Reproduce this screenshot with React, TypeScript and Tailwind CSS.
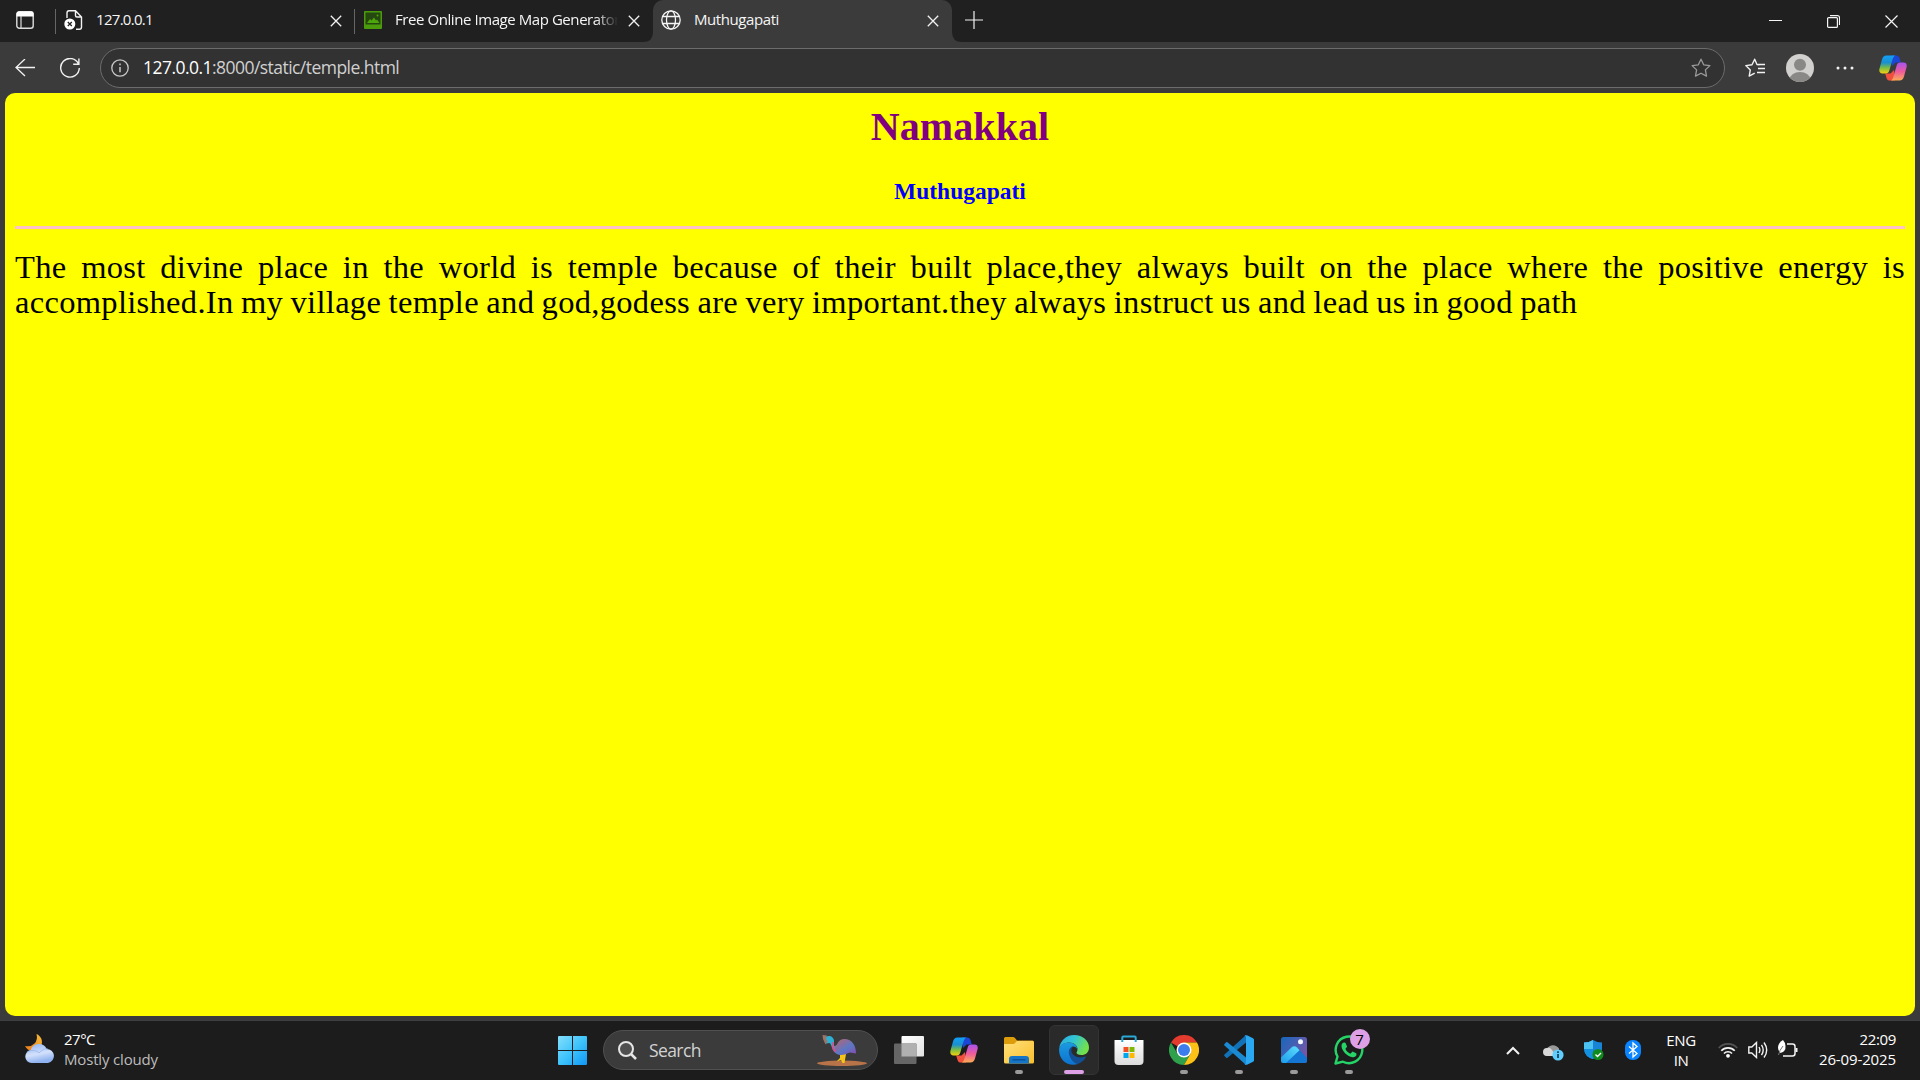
import React from "react";
import type { ReactNode } from "react";

function Close({ className = "" }: { className?: string }) {
  return (
    <svg className={className} width="12" height="12" viewBox="0 0 12 12" fill="none" stroke="#f2f2f2" strokeWidth="1.3">
      <path d="M.8 .8 11.2 11.2M11.2 .8 .8 11.2" />
    </svg>
  );
}

function CopilotIcon() {
  return (
    <svg width="28" height="26" viewBox="0 0 28 26">
      <defs>
        <linearGradient id="cpA" x1="0" y1="0" x2="0" y2="1">
          <stop offset="0" stopColor="#12a0f5" />
          <stop offset=".4" stopColor="#1a8fd0" />
          <stop offset=".7" stopColor="#7fbf3f" />
          <stop offset="1" stopColor="#f7cf10" />
        </linearGradient>
        <linearGradient id="cpB" x1="0" y1="0" x2="0" y2="1">
          <stop offset="0" stopColor="#a653f0" />
          <stop offset=".5" stopColor="#ee5a9c" />
          <stop offset="1" stopColor="#fbab55" />
        </linearGradient>
      </defs>
      <path d="M12 .5h5c2 0 3 1 3.500 2.600L21.800 7.500h-5.300L13 11z" fill="#1c46d6" />
      <path d="M16 25.500h-5c-2 0-3-1-3.500-2.600L6.200 18.500h5.300L15 15z" fill="#f0503c" />
      <path d="M7.500.5h9c-1.600.6-2.300 2-2.800 3.600l-3.400 11.500c-.6 2-1.600 2.900-3.600 2.900H3.500C1 18.500-.2 16.800.4 14L3 4.500C3.700 2 5.200.5 7.500.5z" fill="url(#cpA)" />
      <path d="M20.500 25.500h-9c1.600-.6 2.300-2 2.800-3.600l3.400-11.500c.6-2 1.600-2.900 3.600-2.900h3.200c2.500 0 3.700 1.700 3.100 4.500L25 21.500c-.7 2.500-2.200 4-4.500 4z" fill="url(#cpB)" />
    </svg>
  );
}

function TabStrip() {
  return (
    <div className="flex h-[42px] bg-[#202020] text-[15px] text-[#f5f5f5]">
      <div className="flex w-[55px] items-center pb-[2px] pl-4">
        <svg width="18" height="18" viewBox="0 0 18 18" fill="none">
          <rect x=".8" y=".8" width="16.400" height="16.400" rx="2.500" stroke="#ddd" strokeWidth="1.400" />
          <path d="M.5 5.500V3Q.5.5 3 .5h12q2.500 0 2.500 2.500v2.500z" fill="#fff" />
          <path d="M5 5v12" stroke="#ddd" strokeWidth="1.200" />
        </svg>
      </div>
      <div className="mt-[9px] h-[25px] w-px bg-[#666]" />
      <div className="flex w-[298px] items-center pb-[2px] pl-2">
        <svg className="shrink-0" width="19" height="20" viewBox="0 0 19 20" fill="none">
          <path d="M3 8V3Q3 .8 5 .8h6.500L17.500 7v10q0 2.200-2 2.200H12M11.500 1v4.500q0 1.500 1.500 1.500h4.500" stroke="#f2f2f2" strokeWidth="1.400" />
          <circle cx="5.800" cy="14" r="5.500" fill="#fff" />
          <path d="m3.800 12 4 4m0-4-4 4" stroke="#222" strokeWidth="1.300" />
        </svg>
        <span className="-mt-[2px] ml-[13px] w-[234px] shrink-0 tracking-[-0.7px]">127.0.0.1</span>
        <Close className="mt-[1px] shrink-0" />
      </div>
      <div className="mt-[9px] h-[25px] w-px bg-[#666]" />
      <div className="flex w-[298px] items-center pb-[2px] pl-[9px]">
        <svg className="shrink-0" width="18" height="18" viewBox="0 0 18 18">
          <rect width="18" height="18" rx="1" fill="#4a9c0c" />
          <path d="M1.500 1.500h15v12h-15z" fill="#24480f" />
          <path d="M3 12l3-4 1.500 1.500L10 6.500l2 3 1-1 2.500 3.500z" fill="#4da60a" />
          <circle cx="13.500" cy="4.500" r="1" fill="#4da60a" />
        </svg>
        <span className="-mt-[2px] ml-[13px] w-[223px] shrink-0 overflow-hidden whitespace-nowrap tracking-[-0.43px] [mask-image:linear-gradient(to_right,black_90%,transparent)]">
          Free Online Image Map Generator
        </span>
        <Close className="mt-[1px] ml-[10px] shrink-0" />
      </div>
      <div className="relative flex h-[42px] w-[299px] items-center rounded-t-[10px] bg-[#3b3b3b] pb-[2px] pl-2">
        <svg className="absolute bottom-0 -left-[10px]" width="10" height="10" viewBox="0 0 10 10">
          <path d="M10 0v10H0Q10 10 10 0z" fill="#3b3b3b" />
        </svg>
        <svg className="absolute -right-[10px] bottom-0" width="10" height="10" viewBox="0 0 10 10">
          <path d="M0 0v10h10Q0 10 0 0z" fill="#3b3b3b" />
        </svg>
        <svg className="shrink-0" width="20" height="20" viewBox="0 0 20 20" fill="none" stroke="#f5f5f5" strokeWidth="1.300">
          <circle cx="10" cy="10" r="9.200" />
          <ellipse cx="10" cy="10" rx="4.500" ry="9.200" />
          <path d="M1.500 6.500h17M1.500 13.500h17" />
        </svg>
        <span className="-mt-[2px] ml-[13px] w-[233px] shrink-0 tracking-[-0.42px]">Muthugapati</span>
        <Close className="mt-[1px] shrink-0" />
      </div>
      <div className="flex flex-1 items-start">
        <svg className="mt-[11px] ml-[13px]" width="18" height="18" viewBox="0 0 18 18" stroke="#f2f2f2" strokeWidth="1.200">
          <path d="M9 0v18M0 9h18" />
        </svg>
        <svg className="mt-[14px] ml-auto" width="13" height="14" viewBox="0 0 13 14" stroke="#f5f5f5">
          <path d="M0 6.500h13" />
        </svg>
        <svg className="mt-[15px] ml-[45px]" width="13" height="13" viewBox="0 0 13 13" fill="none" stroke="#f5f5f5" strokeWidth="1.200">
          <rect x=".6" y="2.600" width="9.800" height="9.800" rx="1" />
          <path d="M3 .6h7.500q2 0 2 2v7.400" />
        </svg>
        <svg className="mt-[15px] mr-[22px] ml-[45px]" width="13" height="13" viewBox="0 0 13 13" stroke="#f5f5f5" strokeWidth="1.200">
          <path d="M.5.5l12 12M12.500.5l-12 12" />
        </svg>
      </div>
    </div>
  );
}

const STAR = "M10 1.200 12.700 6.800 18.900 7.600 14.400 11.900 15.500 18.100 10 15.200 4.500 18.100 5.600 11.900 1.100 7.600 7.300 6.800z";

function Toolbar() {
  return (
    <div className="flex h-[51px] items-center bg-[#3b3b3b] pt-px">
      <svg className="ml-[15px]" width="20" height="18" viewBox="0 0 20 18" fill="none" stroke="#f2f2f2" strokeWidth="1.300">
        <path d="M20 8.500H1M10 0 1 8.500l9 8.500" />
      </svg>
      <svg className="ml-[25px]" width="20" height="20" viewBox="0 0 20 20" fill="none" stroke="#f2f2f2" strokeWidth="1.400">
        <path d="M18.500 6A9.300 9.300 0 1 0 19.300 10M18.900.5v5.700h-5.700" />
      </svg>
      <div className="ml-5 flex h-10 w-[1625px] items-center rounded-full border border-[#6c6c6c] bg-[#323232] pr-[13px] pl-[10px]">
        <svg width="18" height="18" viewBox="0 0 18 18" fill="none" stroke="#c8c8c8" strokeWidth="1.300">
          <circle cx="9" cy="9" r="8.200" />
          <path d="M9 8v5.200M9 4.500v1.800" strokeWidth="1.500" />
        </svg>
        <span className="-mt-[2px] ml-[14px] text-[17.5px] tracking-[-0.54px] text-[#d0d0d0]">
          <span className="text-white">127.0.0.1</span>:8000/static/temple.html
        </span>
        <svg className="ml-auto" width="20" height="20" viewBox="0 0 20 20" fill="none" stroke="#9a9a9a" strokeWidth="1.300" strokeLinejoin="round">
          <path d={STAR} />
        </svg>
      </div>
      <svg className="ml-5" width="20" height="20" viewBox="0 0 20 20" fill="none" stroke="#f2f2f2" strokeWidth="1.400" strokeLinejoin="round">
        <path d="M14.500 6.800 12 6.500 9.700 1.200 7 6.800.8 7.600 5.300 11.900 4.200 18.100 9.700 15.200M13 6.500h7M13 10.500h7M12 14.500h8" />
      </svg>
      <svg className="ml-[21px]" width="28" height="28" viewBox="0 0 28 28">
        <defs>
          <clipPath id="avatar"><circle cx="14" cy="14" r="14" /></clipPath>
        </defs>
        <g clipPath="url(#avatar)">
          <rect width="28" height="28" fill="#d2d0ce" />
          <circle cx="14" cy="10.800" r="6" fill="#8a8886" />
          <ellipse cx="14" cy="26" rx="10.500" ry="8" fill="#8a8886" />
        </g>
      </svg>
      <svg className="ml-[22px]" width="18" height="4" viewBox="0 0 18 4" fill="#f2f2f2">
        <circle cx="2" cy="2" r="1.500" /><circle cx="9" cy="2" r="1.500" /><circle cx="16" cy="2" r="1.500" />
      </svg>
      <div className="ml-[25px]"><CopilotIcon /></div>
    </div>
  );
}

function Page() {
  return (
    <div className="flex h-[927px] flex-col bg-[#3b3b3b] px-[5px]">
      <div className="h-[923px] rounded-[10px] bg-[#ffff00] px-[10px] pt-[11px]">
        <h1 className="text-center font-['Liberation_Serif',serif] text-[40px] leading-[46px] font-bold tracking-[0.1px] text-[purple]">Namakkal</h1>
        <h3 className="mt-[28px] text-center font-['Liberation_Serif',serif] text-[23.4px] leading-[27px] font-bold tracking-[0.05px] text-[#0000ff]">Muthugapati</h3>
        <div className="mt-[21px] h-[3px] bg-[pink]" />
        <div className="mt-[21px] font-['Liberation_Serif',serif] text-[32.500px] leading-[35px] whitespace-nowrap text-black">
          <p className="tracking-[0.31px] [text-align-last:justify]">
            The most divine place in the world is temple because of their built place,they always built on the place where the positive energy is
          </p>
          <p className="tracking-[0.31px] [word-spacing:-1px]">
            accomplished.In my village temple and god,godess are very important.they always instruct us and lead us in good path
          </p>
        </div>
      </div>
    </div>
  );
}

function Slot({ children, mark = "dot" }: { children: ReactNode; mark?: "none" | "dot" | "active" }) {
  return (
    <div className="flex h-full w-[55px] flex-col items-center pt-1">
      <div
        className={
          mark === "active"
            ? "flex h-[50px] w-[50px] flex-col items-center rounded-md border border-[#333] bg-[#2a2a2a]"
            : "flex h-[50px] w-[50px] flex-col items-center border border-transparent"
        }
      >
        <div className="flex h-[44px] items-center pt-[4px]">{children}</div>
        {mark === "dot" && <div className="h-1 w-2 shrink-0 rounded-full bg-[#9a9a9a]" />}
        {mark === "active" && <div className="h-1 w-5 shrink-0 rounded-full bg-[#dda0e6]" />}
      </div>
    </div>
  );
}

function WeatherIcon() {
  return (
    <svg width="30" height="30" viewBox="0 0 30 30">
      <defs>
        <linearGradient id="moon" x1="1" y1="0" x2="0" y2="1">
          <stop offset="0" stopColor="#f5bd3c" /><stop offset="1" stopColor="#ee7a18" />
        </linearGradient>
        <linearGradient id="cloud" x1="0" y1="0" x2=".3" y2="1">
          <stop offset="0" stopColor="#8fb4f5" /><stop offset=".6" stopColor="#d3e0fa" /><stop offset="1" stopColor="#8fb2f0" />
        </linearGradient>
      </defs>
      <path d="M11.500 0C16 2 18 6.500 16.500 11L8 17Q2.500 17 0 12q6 1.200 9.500-2.500T11.500 0z" fill="url(#moon)" />
      <path d="M6.500 29a6.500 6.500 0 0 1-.8-12.900 8.600 8.600 0 0 1 16-1.200A7.100 7.100 0 0 1 23 29z" fill="url(#cloud)" />
      <path d="M2 18c6-3 10-1 12 1 3-3 6-5 9-4" fill="none" stroke="#8fb0ee" strokeWidth="1" opacity=".7" />
    </svg>
  );
}

function Bird() {
  return (
    <svg width="50" height="31" viewBox="0 0 50 31">
      <defs>
        <linearGradient id="plume" x1="0" y1="0" x2="1" y2="1">
          <stop offset="0" stopColor="#b3705f" /><stop offset=".35" stopColor="#8c6c9c" /><stop offset=".6" stopColor="#5a78c4" /><stop offset="1" stopColor="#8c48b0" />
        </linearGradient>
      </defs>
      <ellipse cx="25" cy="28.300" rx="25" ry="2.700" fill="#b87448" />
      <path d="M23 19h5l-2 5 1 4h-1.500l-1.500-3-4.500 1.500L23 23zM27 19h2l-1.500 9h-2z" fill="#f5c518" />
      <path d="M14 8c1 5 1 9 7 11.500 4 1.500 8-.5 12-2l6 1c0-7-3-14.500-12-14.500-5 0-6 4.500-8 6.500-2 1-4 0-5-2.500z" fill="url(#plume)" />
      <path d="M8.500 2c4-2.500 8.500 0 8.500 4 0 2-.5 4 1 8-4-1.500-3.500-5-5.500-6l-3.500.5z" fill="#2fb0d2" />
      <path d="M5.500 0l4.500.5-1 3 1.500 3-2 3L6 4z" fill="#9a7668" />
      <path d="M15.500 7c.5 3-.5 6 3 9.500" stroke="#e34a92" strokeWidth="1.500" fill="none" />
    </svg>
  );
}

function EdgeIcon() {
  return (
    <svg width="30" height="30" viewBox="0 0 30 30">
      <defs>
        <linearGradient id="egTop" x1="0" y1="0" x2="1" y2=".4">
          <stop offset="0" stopColor="#2aa7e6" /><stop offset=".5" stopColor="#31c5d3" /><stop offset="1" stopColor="#72e04c" />
        </linearGradient>
        <linearGradient id="egLeft" x1="0" y1="0" x2="0" y2="1">
          <stop offset="0" stopColor="#1b9be0" /><stop offset="1" stopColor="#0d72cf" />
        </linearGradient>
      </defs>
      <path d="M.2 13.500C1 6 7 0 15 0c9 0 15 6 15 12.500 0 5-3.500 7.500-7.500 7.500-3.500 0-5-1.200-5-2.200 0-.8 1-1.300 1-3.800 0-3.500-3.500-6.500-8.200-6.500C6 7.500 1.500 9.500.2 13.500z" fill="url(#egTop)" />
      <path d="M11 12c-3.500 2-4 7-1.500 11.500 2 3.500 5.500 5.500 9 5.500 3.500-1 6.500-3.500 8.200-6.500.4-.8-.2-1.300-.8-.9C20 24 12.500 21 12.300 15.500c0-1.500.7-3 2.200-4z" fill="#124f94" />
      <path d="M.1 14C1 9.500 5.500 7.300 10 7.500c5 .2 8.300 3 8.200 6.500-1-1.800-2.600-2.500-4-2.500-3 0-5 3.500-4.200 7.500 1 5 5 9.500 9 10-10 3.200-19.500-4-18.900-15z" fill="url(#egLeft)" />
    </svg>
  );
}

function ChromeIcon() {
  return (
    <svg width="30" height="30" viewBox="0 0 30 30">
      <path d="M15 15 2 7.500A15 15 0 0 1 28 7.500H15z" fill="#e33b2e" />
      <path d="M15 15 8.500 18.750 2 7.500A15 15 0 0 0 15 30l6.500-11.250z" fill="#2fa04c" />
      <path d="M15 7.500h13A15 15 0 0 1 15 30l6.500-11.250z" fill="#fbc116" />
      <circle cx="15" cy="15" r="7.500" fill="#fff" />
      <circle cx="15" cy="15" r="6" fill="#3b7ded" />
    </svg>
  );
}

function Taskbar() {
  return (
    <div className="flex h-[60px] items-start border-t border-[#3d4043] bg-[#1c1c1c] text-[15px]">
      <div className="flex w-[546px] items-start pt-[13px] pl-[25px]">
        <WeatherIcon />
        <div className="-mt-[5px] ml-[9px] leading-5">
          <div className="tracking-[-0.5px] text-white">27°C</div>
          <div className="tracking-[-0.17px] text-[#bdbdbd]">Mostly cloudy</div>
        </div>
      </div>
      <svg className="mt-[15px] ml-3" width="29" height="29" viewBox="0 0 29 29">
        <defs>
          <linearGradient id="win" x1="0" y1="0" x2="1" y2="1">
            <stop offset="0" stopColor="#85dffc" /><stop offset=".5" stopColor="#3fc4fb" /><stop offset="1" stopColor="#0f97f5" />
          </linearGradient>
        </defs>
        <path d="M0 1q0-1 1-1h13v14H0zM15 0h13q1 0 1 1v13H15zM0 15h14v14H1q-1 0-1-1zM15 15h14v13q0 1-1 1H15z" fill="url(#win)" />
      </svg>
      <div className="mt-[9px] ml-4 flex h-10 w-[275px] items-center rounded-full border border-[#505050] bg-[#3b3b3b] pl-[14px]">
        <svg width="19" height="19" viewBox="0 0 19 19" fill="none" stroke="#e6e6e6" strokeWidth="2">
          <circle cx="8" cy="8" r="7" fill="#505050" /><path d="m13 13 5 5" strokeWidth="2.500" />
        </svg>
        <span className="ml-3 text-[17.5px] tracking-[-0.6px] text-[#d2d2d2]">Search</span>
        <div className="mr-[10px] ml-auto"><Bird /></div>
      </div>
      <div className="ml-[3px] flex h-full w-[495px]">
        <Slot mark="none">
          <svg width="30" height="28" viewBox="0 0 30 28">
            <defs><linearGradient id="tv" x1="0" y1="0" x2="1" y2="1"><stop stopColor="#fff" /><stop offset="1" stopColor="#e2e2e2" /></linearGradient></defs>
            <rect x="7.500" width="22.500" height="20.500" rx="1" fill="url(#tv)" />
            <rect y="7.500" width="22.500" height="20.500" rx="1" fill="#666" />
            <rect x="7.500" y="7.500" width="15" height="13" fill="#b0b0b0" />
          </svg>
        </Slot>
        <Slot mark="none"><CopilotIcon /></Slot>
        <Slot>
          <svg width="30" height="27" viewBox="0 0 30 27">
            <defs><linearGradient id="fo" x1="0" y1="0" x2="1" y2="1"><stop stopColor="#ffe07a" /><stop offset="1" stopColor="#fabf2c" /></linearGradient></defs>
            <path d="M0 1.500Q0 0 1.500 0H9q1 0 2 1l2 2.500h15.500Q30 3.500 30 5v6H0z" fill="#dd9d0b" />
            <path d="M0 7h10l3-3h15.500Q30 4 30 5.500V25q0 1.500-1.500 1.500h-27Q0 26.500 0 25z" fill="url(#fo)" />
            <path d="M5 26.500V22q0-3 3-3h14q3 0 3 3v4.500z" fill="#1575c8" />
            <path d="M8.500 22.800h13" stroke="#0b4d90" strokeWidth="1.300" />
          </svg>
        </Slot>
        <Slot mark="active"><EdgeIcon /></Slot>
        <Slot mark="none">
          <svg width="30" height="30" viewBox="0 0 30 30">
            <defs><linearGradient id="st" x1="0" y1="0" x2="0" y2="1"><stop stopColor="#fff" /><stop offset="1" stopColor="#dcdcdc" /></linearGradient></defs>
            <path d="M.5 5.500Q.5 5 1 5h28q.5 0 .5.500V26q0 4-4 4h-21q-4 0-4-4z" fill="url(#st)" />
            <path d="M8.300 7V2.500q0-1 1-1h11.400q1 0 1 1V7" fill="none" stroke="#2aa9d8" strokeWidth="2" />
            <path d="M9.500 12h5v5h-5z" fill="#f25022" /><path d="M15.500 12h5v5h-5z" fill="#7fba00" />
            <path d="M9.500 18h5v5h-5z" fill="#00a4ef" /><path d="M15.500 18h5v5h-5z" fill="#ffb900" />
          </svg>
        </Slot>
        <Slot><ChromeIcon /></Slot>
        <Slot>
          <svg width="30" height="30" viewBox="0 0 30 30">
            <path d="M22 7.500 3.500 22.700q-.8.500-1.400 0L.5 21q-.7-.8 0-1.500L22 0z" fill="#1272b8" />
            <path d="M22 22.500 3.500 7.300q-.8-.5-1.400 0L.5 9q-.7.800 0 1.500L22 30z" fill="#1a8ad4" />
            <path d="M20.500.5Q22-.2 23.500.5l5.500 2.700q1 .5 1 1.600v20.400q0 1.100-1 1.600l-5.500 2.700q-1.500.7-3 0Q22 29.500 22 27.500v-25Q22 1 20.500.5z" fill="#2aa8f2" />
          </svg>
        </Slot>
        <Slot>
          <svg width="26" height="26" viewBox="0 0 26 26">
            <defs>
              <linearGradient id="ph" x1="0" y1="0" x2="1" y2=".6"><stop stopColor="#1568bd" /><stop offset="1" stopColor="#7656a8" /></linearGradient>
              <linearGradient id="ph2" x1="1" y1="0" x2="0" y2="1"><stop stopColor="#5de0ff" /><stop offset="1" stopColor="#1c9bea" /></linearGradient>
              <clipPath id="phc"><rect width="26" height="26" rx="2.500" /></clipPath>
            </defs>
            <g clipPath="url(#phc)">
              <path d="M0 0h26v26H0z" fill="url(#ph)" />
              <path d="M17 11.500 26 21v5H3z" fill="#1476d2" />
              <path d="M0 20.500 10.500 10.500q2.800-2.400 5.500 0l2.500 2.700L5 26H0z" fill="url(#ph2)" />
              <circle cx="19.500" cy="4.700" r="2.500" fill="#f4f8ff" />
            </g>
          </svg>
        </Slot>
        <Slot>
          <div className="relative">
            <svg width="30" height="30" viewBox="0 0 30 30" fill="none">
              <path d="M1.500 28.500 3.500 21.500A13.300 13.300 0 1 1 9 26.700z" stroke="#25d366" strokeWidth="2.400" strokeLinejoin="round" />
              <path d="M10.500 7.500c-1.500-.3-3.200 1.300-3 3.700.5 5 6 10.500 11 11 2.500.2 4.300-1.500 4-3.300l-.3-.6-3.700-1.700-2.100 2.100c-2.400-.9-4-2.500-5-4.900l1.700-2.100L11.600 8z" fill="#25d366" />
            </svg>
            <div className="absolute -top-[6px] left-[16px] flex h-5 w-5 items-center justify-center rounded-full bg-[#dda0e6] text-[15px] leading-none text-black">7</div>
          </div>
        </Slot>
      </div>
      <div className="flex h-[58px] flex-1 items-center text-white">
        <svg className="ml-[130px]" width="14" height="9" viewBox="0 0 14 9" fill="none" stroke="#f2f2f2" strokeWidth="2"><path d="M1 8l6-6 6 6" /></svg>
        <svg className="mt-1 ml-[23px]" width="21" height="18" viewBox="0 0 21 18">
          <path d="M4 13a4 4 0 0 1 0-7.500 7 6.500 0 0 1 12 0v7.500z" fill="#999" /><path d="M4 13a4 4 0 0 1 0-8q3-1 5 2l4 6z" fill="#d8d8d8" />
          <circle cx="15" cy="12" r="5.600" fill="#60cdff" /><path d="M15 11v4M15 8.300v1.600" stroke="#102a40" strokeWidth="1.500" />
        </svg>
        <svg className="ml-5" width="20" height="21" viewBox="0 0 20 21">
          <path d="M9 0q4 2.500 9 2.500v7Q17 17 9 19 1 17 0 9.500v-7Q5 2.500 9 0z" fill="#1884d8" /><path d="M9 0v9H0V2.500Q5 2.500 9 0z" fill="#4cc2f1" /><path d="M0 9h9v10Q1 17 0 9z" fill="#1490df" />
          <circle cx="14" cy="14.500" r="5.500" fill="#108a1c" /><path d="m11.500 14.500 2 2 3.500-3.500" stroke="#fff" strokeWidth="1.400" fill="none" />
        </svg>
        <svg className="ml-[21px]" width="16" height="20" viewBox="0 0 16 20">
          <rect width="16" height="20" rx="7.500" fill="#0a84ff" /><path d="m4 6.500 8 7L8 17V3l4 3.500-8 7" fill="none" stroke="#fff" strokeWidth="1.300" />
        </svg>
        <div className="ml-[20px] w-10 text-center leading-5 tracking-[-0.4px]">ENG<br />IN</div>
        <svg className="ml-[17px]" width="20" height="16" viewBox="0 0 20 16" fill="none" strokeWidth="1.700">
          <path d="M.8 6a12.500 12.500 0 0 1 18.400 0" stroke="#555" /><path d="M3.300 8.800a9 9 0 0 1 13.400 0M6 11.500a5.500 5.500 0 0 1 8 0" stroke="#f5f5f5" /><circle cx="10" cy="13.800" r="1.900" fill="#fff" />
        </svg>
        <svg className="ml-[10px]" width="20" height="18" viewBox="0 0 20 18" fill="none" stroke="#f2f2f2" strokeWidth="1.400">
          <path d="M.8 6h3L8.500 1.500v15L3.800 12h-3zM11 6q1.800 3 0 6M13.500 3.800q3.400 5.200 0 10.400M16 1.500q5.400 7.500 0 15" />
        </svg>
        <svg className="-mt-[2px] ml-[9px]" width="21" height="18" viewBox="0 0 21 18" fill="none" stroke="#f2f2f2" strokeWidth="1.500">
          <path d="M10 4h5.500Q18 4 18 6.500v7q0 2.500-2.500 2.500H6" /><path d="M19.500 8v4" strokeWidth="2" />
          <path d="M6 0q-5 3-5 7.500Q1 11 3.500 13 9 11.500 8.500 6 8 2 6 0z" fill="#fff" stroke="none" /><path d="M1.500 15q1-5 4.500-9" stroke="#777" strokeWidth="1" />
        </svg>
        <div className="-mt-[2px] mr-6 ml-auto text-right leading-5 tracking-[-0.12px] whitespace-nowrap"><span className="tracking-[-0.35px]">22:09</span><br />26-09-2025</div>
      </div>
    </div>
  );
}

export default function App() {
  return (
    <div className="flex h-[1080px] w-[1920px] flex-col overflow-hidden bg-[#3b3b3b] font-['Open_Sans',sans-serif]">
      <TabStrip />
      <Toolbar />
      <Page />
      <Taskbar />
    </div>
  );
}
